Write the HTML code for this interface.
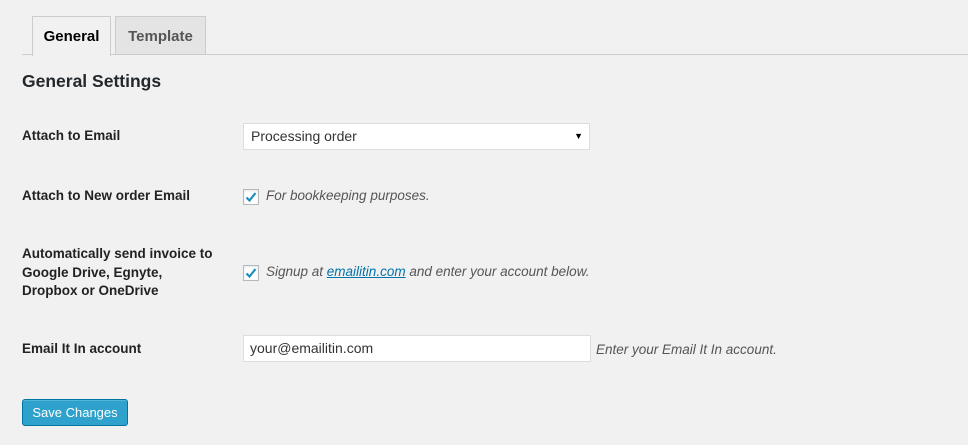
<!DOCTYPE html>
<html><head><style>
body{margin:0;width:968px;height:445px;background:#f1f1f1;font-family:"Liberation Sans",sans-serif;color:#222;position:relative;overflow:hidden}
.a{position:absolute;white-space:nowrap}
.lbl{font-size:13.5px;font-weight:bold;color:#222}
.it{font-style:italic;font-size:13.5px;color:#555}
.cb{position:absolute;width:14px;height:14px;border:1px solid #b4b9be;background:#fff;box-shadow:inset 0 1px 2px rgba(0,0,0,.1)}
</style></head><body>
<div class="a" style="left:22px;top:54px;width:946px;height:1px;background:#ccc"></div>
<div class="a" style="left:32px;top:16px;width:77px;height:39px;border:1px solid #ccc;border-bottom:none;background:#f1f1f1;font-size:15px;font-weight:bold;text-align:center;line-height:39px;color:#000">General</div>
<div class="a" style="left:115px;top:16px;width:89px;height:37px;border:1px solid #ccc;border-bottom:none;background:#e4e4e4;font-size:15px;font-weight:bold;text-align:center;line-height:39px;color:#555">Template</div>
<div class="a" style="left:22px;top:71px;font-size:17.5px;font-weight:600;color:#23282d">General Settings</div>
<div class="a lbl" style="left:22px;top:128px">Attach to Email</div>
<div class="a" style="left:243px;top:123px;width:347px;height:27px;background:#fff;border:1px solid #ddd;box-sizing:border-box;font-size:14px;line-height:25px;padding-left:7px;color:#333">Processing order<span style="position:absolute;right:6px;top:0;font-size:9px;color:#000">▼</span></div>
<div class="a lbl" style="left:22px;top:188px">Attach to New order Email</div>
<div class="cb" style="left:243px;top:189px"><svg width="14" height="14" viewBox="0 0 14 14"><path d="M2.5 7.5 L5.5 10.5 L11.5 3" stroke="#1e8cbe" stroke-width="2.2" fill="none"/></svg></div>
<div class="a it" style="left:266px;top:188px">For bookkeeping purposes.</div>
<div class="a lbl" style="left:22px;top:245px;line-height:18.5px">Automatically send invoice to<br>Google Drive, Egnyte,<br>Dropbox or OneDrive</div>
<div class="cb" style="left:243px;top:265px"><svg width="14" height="14" viewBox="0 0 14 14"><path d="M2.5 7.5 L5.5 10.5 L11.5 3" stroke="#1e8cbe" stroke-width="2.2" fill="none"/></svg></div>
<div class="a it" style="left:266px;top:264px">Signup at <span style="color:#0073aa;text-decoration:underline">emailitin.com</span> and enter your account below.</div>
<div class="a lbl" style="left:22px;top:341px">Email It In account</div>
<div class="a" style="left:243px;top:335px;width:348px;height:27px;background:#fff;border:1px solid #ddd;box-sizing:border-box;font-size:14px;line-height:25px;padding-left:6px;color:#333">your@emailitin.com</div>
<div class="a it" style="left:596px;top:342px">Enter your Email It In account.</div>
<div class="a" style="left:22px;top:399px;width:106px;height:27px;background:#2ea2cc;border:1px solid #0074a2;box-sizing:border-box;border-radius:3px;color:#fff;font-size:13px;text-align:center;line-height:25px;box-shadow:inset 0 1px 0 rgba(120,200,230,.5)">Save Changes</div>
</body></html>
